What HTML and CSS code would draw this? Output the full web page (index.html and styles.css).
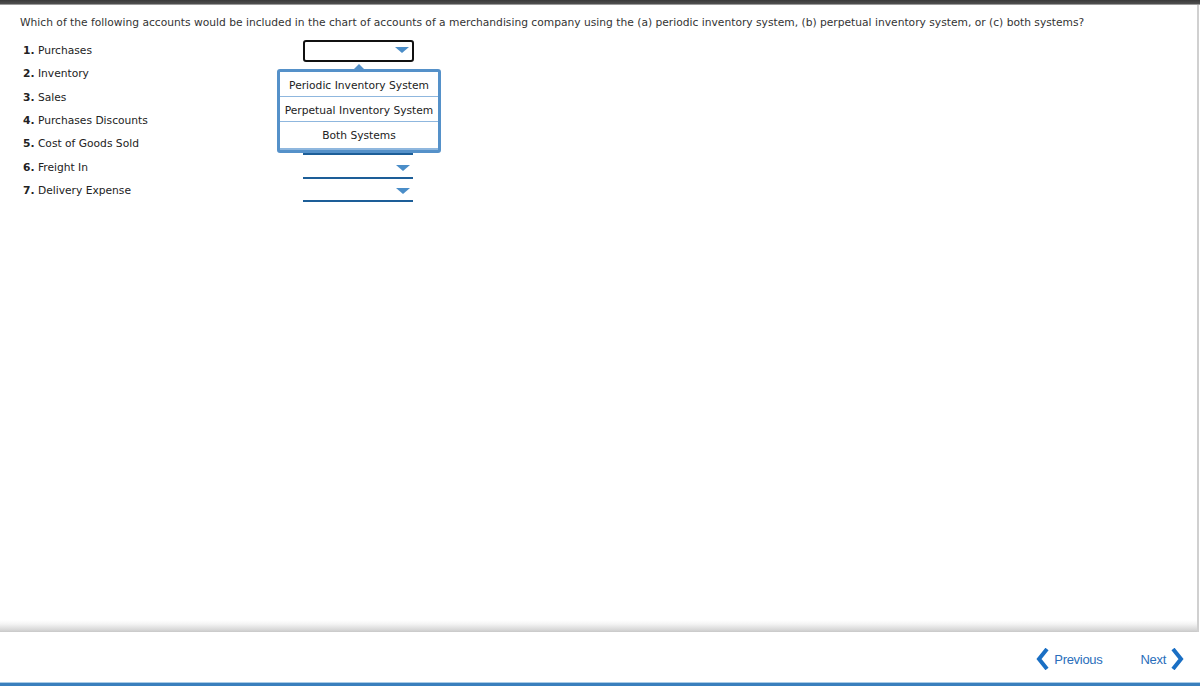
FILE: index.html
```html
<!DOCTYPE html>
<html lang="en">
<head>
<meta charset="utf-8">
<title>Chart of accounts</title>
<link rel="stylesheet" href="styles.css">
</head>
<body>
<div class="page">
  <div class="topbar"></div>
  <main class="main">
    <p class="question">Which of the following accounts would be included in the chart of accounts of a merchandising company using the (a) periodic inventory system, (b) perpetual inventory system, or (c) both systems?</p>
    <ol class="items">
      <li class="row">
        <span class="label"><b>1.</b> Purchases</span>
        <span class="select select-open">
          <span class="arrow"></span>
          <span class="popup">
            <span class="caret"></span>
            <span class="option">Periodic Inventory System</span>
            <span class="option">Perpetual Inventory System</span>
            <span class="option">Both Systems</span>
          </span>
        </span>
      </li>
      <li class="row"><span class="label"><b>2.</b> Inventory</span><span class="select"><span class="arrow"></span></span></li>
      <li class="row"><span class="label"><b>3.</b> Sales</span><span class="select"><span class="arrow"></span></span></li>
      <li class="row"><span class="label"><b>4.</b> Purchases Discounts</span><span class="select"><span class="arrow"></span></span></li>
      <li class="row"><span class="label"><b>5.</b> Cost of Goods Sold</span><span class="select"><span class="arrow"></span></span></li>
      <li class="row"><span class="label"><b>6.</b> Freight In</span><span class="select"><span class="arrow"></span></span></li>
      <li class="row"><span class="label"><b>7.</b> Delivery Expense</span><span class="select"><span class="arrow"></span></span></li>
    </ol>
  </main>
  <footer class="footer">
    <a class="nav prev" href="#">
      <svg width="13" height="22" viewBox="0 0 13 22"><path d="M11 1 L3 11 L11 21" fill="none" stroke="#1a6fc4" stroke-width="4" stroke-linejoin="miter"/></svg>
      <span>Previous</span>
    </a>
    <a class="nav next" href="#">
      <span>Next</span>
      <svg width="13" height="22" viewBox="0 0 13 22"><path d="M2 1 L10 11 L2 21" fill="none" stroke="#1a6fc4" stroke-width="4" stroke-linejoin="miter"/></svg>
    </a>
  </footer>
</div>
</body>
</html>
```

FILE: styles.css
```css
html, body {
  margin: 0;
  padding: 0;
  background: #fff;
}

.page {
  width: 1200px;
  height: 686px;
  display: flex;
  flex-direction: column;
  font-family: "DejaVu Sans", Verdana, sans-serif;
  font-size: 10.7px;
  color: #222;
}

.topbar {
  height: 4px;
  background: linear-gradient(#3a3a3a, #505050);
  border-bottom: 1px solid #9a9a9a;
  flex: none;
}

.main {
  flex: 1;
  border-right: 2px solid #d0d0d0;
  margin-right: 1px;
  position: relative;
  padding-left: 20px;
  background: linear-gradient(to bottom, #fff 0, #fff calc(100% - 12px), #f4f4f4 calc(100% - 8px), #d6d6d6 calc(100% - 2px), #c8c8c8 100%);
}

.question {
  margin: 0;
  padding-top: 11px;
  line-height: 13px;
  font-size: 10.7px;
  color: #333;
}

.items {
  list-style: none;
  margin: 0;
  padding: 10px 0 0 3px;
}

.row {
  display: flex;
  align-items: center;
  height: 23.33px;
}

.label {
  width: 280px;
  flex: none;
  color: #222;
}

.label b {
  font-weight: bold;
}

.select {
  position: relative;
  width: 110px;
  height: 21px;
  box-sizing: border-box;
  border-bottom: 2px solid #1d5e98;
  top: 1px;
}

.select-open {
  border: 2px solid #111;
  border-radius: 3px;
  width: 111px;
  height: 22px;
  top: 0;
}

.arrow {
  position: absolute;
  right: 3px;
  top: 7px;
  width: 0;
  height: 0;
  border-left: 7px solid transparent;
  border-right: 7px solid transparent;
  border-top: 6px solid #4a8dc8;
}

.select-open .arrow {
  top: 5px;
  right: 3px;
}

.popup {
  position: absolute;
  left: -28px;
  top: 27px;
  width: 164px;
  height: 84px;
  box-sizing: border-box;
  border: 3px solid #5591c9;
  border-radius: 3px;
  background: #fff;
  display: flex;
  flex-direction: column;
  z-index: 5;
}

.caret {
  position: absolute;
  left: 74px;
  top: -8px;
  width: 0;
  height: 0;
  border-left: 5px solid transparent;
  border-right: 5px solid transparent;
  border-bottom: 5px solid #5591c9;
}

.option {
  height: 25px;
  box-sizing: border-box;
  display: flex;
  align-items: center;
  justify-content: center;
  font-size: 10.7px;
  color: #222;
  border-bottom: 1px solid #8fb7de;
  white-space: nowrap;
  padding-top: 3px;
}

.option:last-child {
  flex: 1;
  border-bottom: 2px solid #8fb7de;
  align-items: flex-start;
  padding-top: 7px;
}

.footer {
  height: 54px;
  flex: none;
  display: flex;
  align-items: center;
  justify-content: flex-end;
  gap: 38px;
  padding-right: 16px;
  box-sizing: border-box;
  border-bottom: 3px solid #3a7fbd;
  box-shadow: inset 0 -1px 0 #a9cbe6;
  font-family: "Liberation Sans", Arial, sans-serif;
  font-size: 13px;
  padding-top: 3px;
}

.nav {
  display: flex;
  align-items: center;
  gap: 5px;
  color: #2a6ebb;
  text-decoration: none;
  letter-spacing: -0.3px;
}

.nav svg {
  display: block;
}
```
